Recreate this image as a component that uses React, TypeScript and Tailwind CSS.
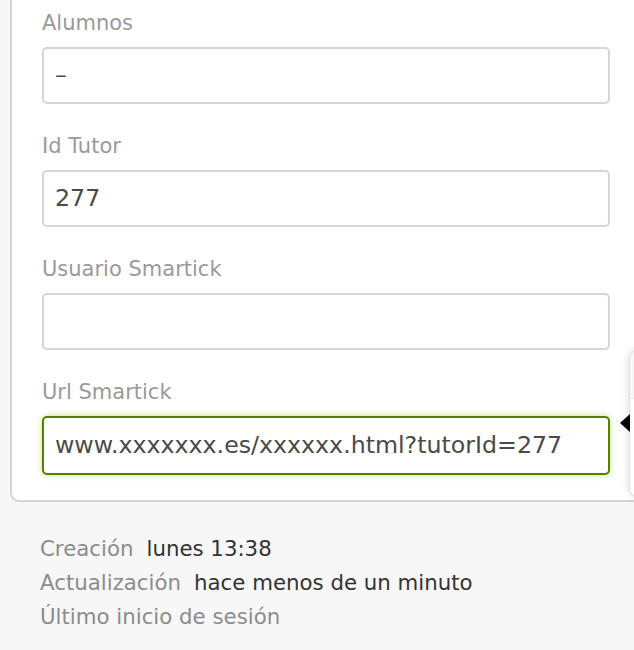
import React from 'react';

const font = { fontFamily: '"DejaVu Sans", "Liberation Sans", sans-serif' };

interface FieldProps {
  label: string;
  value: string;
  focused?: boolean;
}

const Field: React.FC<FieldProps> = ({ label, value, focused }) => {
  return (
    <div className="mb-[25px]">
      <label className="block h-[34px] leading-[34px] text-[21px] text-[#9a9a9a]">{label}</label>
      <div
        className={`mt-[7px] w-[568px] rounded-[5px] bg-white px-[11px] flex items-center text-[23.7px] text-[#4a4a4a] ${
          focused
            ? 'h-[59px] border-2 border-[#5a7d00] shadow-[0_0_6px_rgba(140,200,40,0.55)]'
            : 'h-[57px] border-2 border-[#d6d6d6]'
        }`}
      >
        {value}
      </div>
    </div>
  );
};

const App: React.FC = () => {
  return (
    <div className="relative h-[650px] w-full overflow-hidden bg-[#f7f7f7]" style={font}>
      <div className="ml-[10px] w-[660px] rounded-bl-[9px] border-b-2 border-l-2 border-[#d4d4d4] bg-white pl-[30px] pt-[6px] pb-0">
        <Field label="Alumnos" value="–" />
        <Field label="Id Tutor" value="277" />
        <Field label="Usuario Smartick" value="" />
        <Field label="Url Smartick" value="www.xxxxxxx.es/xxxxxx.html?tutorId=277" focused />
      </div>

      <div className="mt-[30px] pl-[40px] text-[21.3px] leading-[34px]">
        <div>
          <span className="text-[#8c8c8c]">Creación</span>
          <span className="ml-[13px] text-[#333]">lunes 13:38</span>
        </div>
        <div>
          <span className="text-[#8c8c8c]">Actualización</span>
          <span className="ml-[13px] text-[#333]">hace menos de un minuto</span>
        </div>
        <div>
          <span className="text-[#8c8c8c]">Último inicio de sesión</span>
        </div>
      </div>

      {/* popover on the right edge */}
      <div className="absolute left-[629px] top-[350px] h-[147px] w-[60px] overflow-hidden rounded-l-[9px] border border-[#e2e2e2] bg-white shadow-[0_0_8px_rgba(0,0,0,0.15)]">
        <div className="h-[48px] border-b border-[#ececec] bg-[#f7f7f7]" />
      </div>
      <div className="absolute left-[620px] top-[414px] h-0 w-0 border-y-[9px] border-r-[10px] border-y-transparent border-r-black" />
    </div>
  );
};

export default App;
